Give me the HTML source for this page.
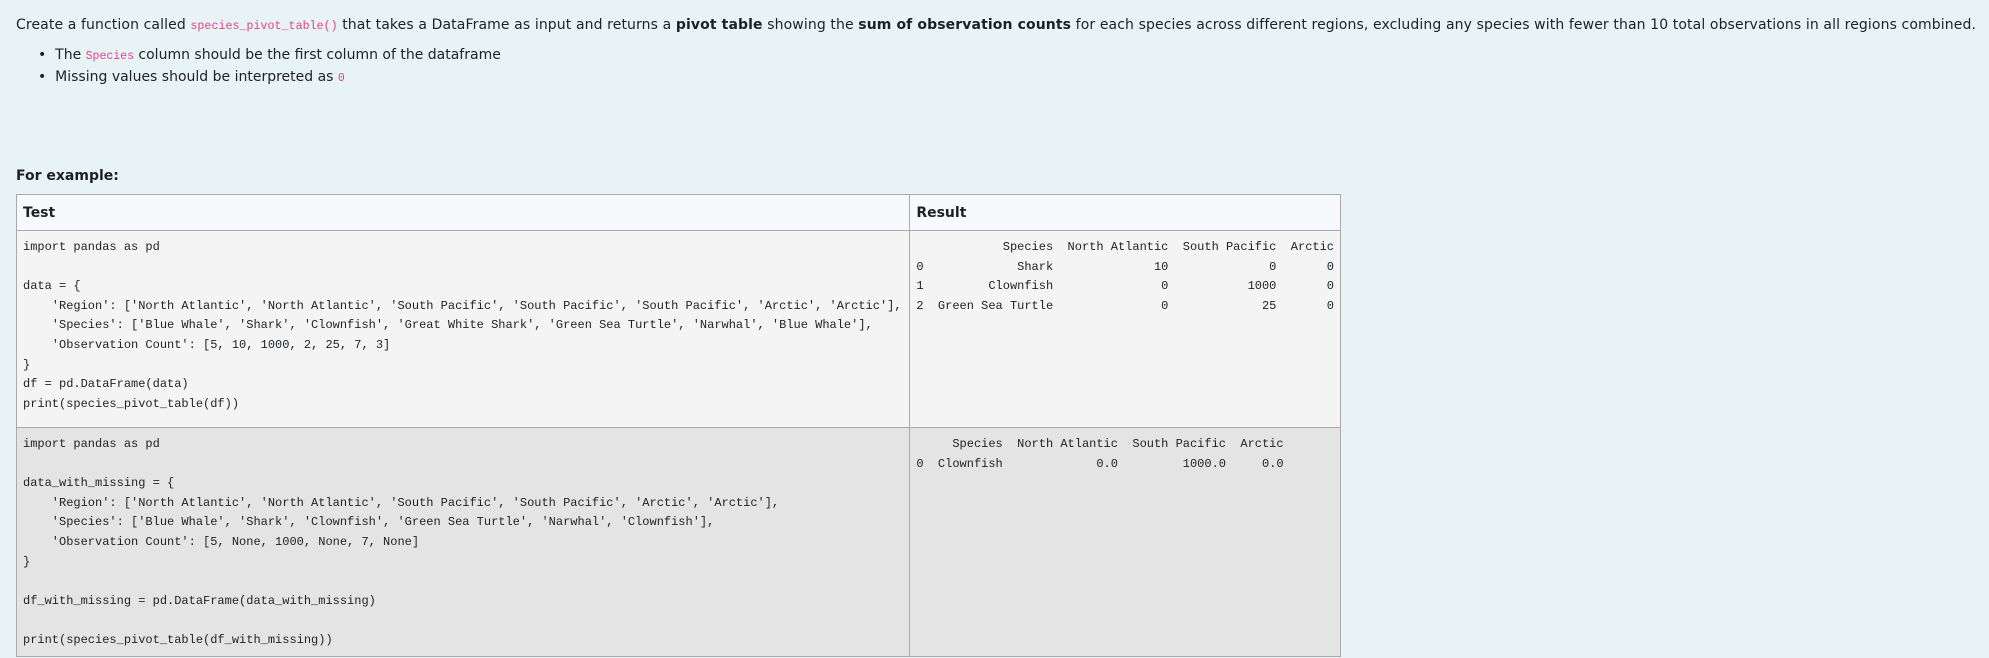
<!DOCTYPE html>
<html><head><meta charset="utf-8"><style>
body{margin:0;width:1989px;height:658px;background:#e7f3f5;font-family:"DejaVu Sans","Liberation Sans",sans-serif;font-size:14px;color:#1d2125;position:relative;overflow:hidden}
.a{position:absolute;white-space:nowrap;line-height:20px}
code{font-family:"Liberation Mono",monospace;font-size:11.5px;color:#e83e8c}
table{position:absolute;left:16px;top:194px;border-collapse:collapse;width:1325px}
td,th{border:1px solid #aaa;vertical-align:top;padding:0 6px;text-align:left}
th{background:#f8f9fc;height:35px;font-weight:bold;font-size:14px;vertical-align:middle}
pre{margin:0;font-family:"Liberation Mono",monospace;font-size:12px;line-height:19.6px;color:#1d2125}
.r1 td{background:#f4f4f4;height:189px;padding-top:7px}
.r2 td{background:#e4e4e4;height:221px;padding-top:7px}
</style></head><body>
<div class="a" style="left:16px;top:15px;letter-spacing:0.11px">Create a function called <code>species_pivot_table()</code> that takes a DataFrame as input and returns a <b>pivot table</b> showing the <b>sum of observation counts</b> for each species across different regions, excluding any species with fewer than 10 total observations in all regions combined.</div>
<div class="a" style="left:38px;top:45px">•&nbsp;&nbsp;The <code>Species</code> column should be the first column of the dataframe</div>
<div class="a" style="left:38px;top:67px">•&nbsp;&nbsp;Missing values should be interpreted as <code>0</code></div>
<div class="a" style="left:16px;top:166px;font-weight:bold">For example:</div>
<table>
<tr><th style="width:881px">Test</th><th>Result</th></tr>
<tr class="r1"><td><pre>import pandas as pd

data = {
    'Region': ['North Atlantic', 'North Atlantic', 'South Pacific', 'South Pacific', 'South Pacific', 'Arctic', 'Arctic'],
    'Species': ['Blue Whale', 'Shark', 'Clownfish', 'Great White Shark', 'Green Sea Turtle', 'Narwhal', 'Blue Whale'],
    'Observation Count': [5, 10, 1000, 2, 25, 7, 3]
}
df = pd.DataFrame(data)
print(species_pivot_table(df))</pre></td><td><pre>            Species  North Atlantic  South Pacific  Arctic
0             Shark              10              0       0
1         Clownfish               0           1000       0
2  Green Sea Turtle               0             25       0</pre></td></tr>
<tr class="r2"><td><pre>import pandas as pd

data_with_missing = {
    'Region': ['North Atlantic', 'North Atlantic', 'South Pacific', 'South Pacific', 'Arctic', 'Arctic'],
    'Species': ['Blue Whale', 'Shark', 'Clownfish', 'Green Sea Turtle', 'Narwhal', 'Clownfish'],
    'Observation Count': [5, None, 1000, None, 7, None]
}

df_with_missing = pd.DataFrame(data_with_missing)

print(species_pivot_table(df_with_missing))</pre></td><td><pre>     Species  North Atlantic  South Pacific  Arctic
0  Clownfish             0.0         1000.0     0.0</pre></td></tr>
</table>
</body></html>
